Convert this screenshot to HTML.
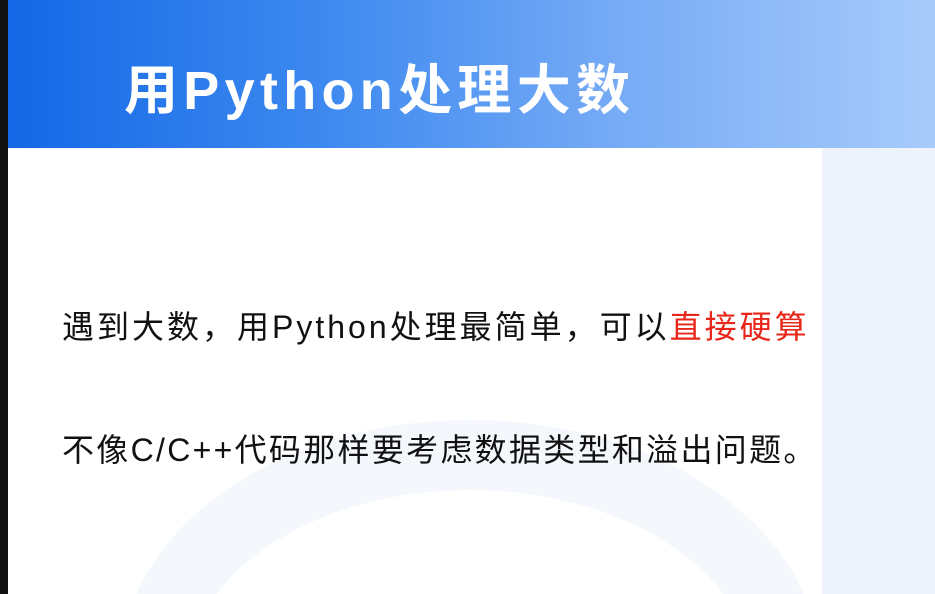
<!DOCTYPE html>
<html><head><meta charset="utf-8"><style>
html,body{margin:0;padding:0;width:935px;height:594px;overflow:hidden;background:#fff;}
.w{position:relative;width:935px;height:594px;overflow:hidden;}
.bl{position:absolute;left:0;top:0;width:8px;height:594px;background:#111;}
.hd{position:absolute;left:8px;top:0;width:927px;height:148px;background:linear-gradient(90deg,#1468e6 0%,#3f8af0 35%,#75aaf5 65%,#a8cbfb 100%);}
.rc{position:absolute;left:822px;top:148px;width:113px;height:446px;background:#eef3fb;}
.arc{position:absolute;left:0;top:0;}
.t{position:absolute;left:124px;top:46px;color:#fff;font:bold 54px "Liberation Sans","Noto Sans CJK SC",sans-serif;white-space:nowrap;letter-spacing:5.3px;}
.l{position:absolute;left:62px;color:#111;font:32px "Liberation Sans","Noto Sans CJK SC",sans-serif;white-space:nowrap;}
.r{color:#e8261a;}
</style></head><body><div class="w">
<div class="hd"></div>
<div class="rc"></div>
<svg class="arc" width="935" height="594"><ellipse cx="470" cy="670" rx="315" ry="215" fill="none" stroke="#f4f7fc" stroke-width="70"/></svg>
<div class="bl"></div>
<div class="t">用Python处理大数</div>
<div class="l" style="top:302px;letter-spacing:3px">遇到大数，用Python处理最简单，可以<span class="r">直接硬算</span></div>
<div class="l" style="top:425px;letter-spacing:2.3px">不像C/C++代码那样要考虑数据类型和溢出问题。</div>
</div></body></html>
